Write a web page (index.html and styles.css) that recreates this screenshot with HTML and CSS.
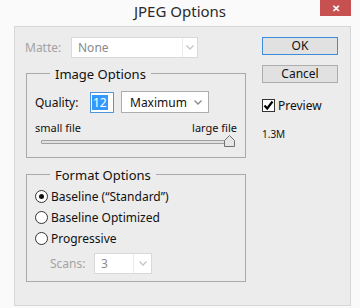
FILE: index.html
```html
<!DOCTYPE html>
<html lang="en">
<head>
    <meta charset="UTF-8">
    <meta name="viewport" content="width=device-width, initial-scale=1.0">
    <title>JPEG Options</title>
    <link rel="stylesheet" href="styles.css">
</head>
<body>
    <div class="window">
        <div class="titlebar">
            <span></span>
            <span class="title">JPEG Options</span>
            <button class="close-btn">&#x2715;</button>
        </div>

        <div class="panel">
            <div class="left">
                <div class="matte-row">
                    <span class="label disabled">Matte:</span>
                    <div class="select select-matte disabled">
                        <span class="select-text">None</span>
                        <span class="select-arrow">
                            <svg width="8" height="5" viewBox="0 0 8 5"><polyline points="0.5,0.5 4,4 7.5,0.5" fill="none" stroke="#c4c4c4" stroke-width="1.3"/></svg>
                        </span>
                    </div>
                </div>

                <div class="group image-group">
                    <div class="group-title">Image Options</div>
                    <div class="quality-row">
                        <span class="label quality-label">Quality:</span>
                        <div class="num-input"><span class="selected-text">12</span></div>
                        <div class="select select-quality">
                            <span class="select-text">Maximum</span>
                            <span class="select-arrow">
                                <svg width="8" height="5" viewBox="0 0 8 5"><polyline points="0.5,0.5 4,4 7.5,0.5" fill="none" stroke="#888" stroke-width="1.3"/></svg>
                            </span>
                        </div>
                    </div>
                    <div class="slider-labels">
                        <span>small file</span>
                        <span>large file</span>
                    </div>
                    <div class="slider">
                        <div class="track"></div>
                        <svg class="thumb" width="11" height="12" viewBox="0 0 11 12">
                            <path d="M0.5,5.5 L5.5,0.5 L10.5,5.5 L10.5,11.5 L0.5,11.5 Z" fill="#e6e6e6" stroke="#707070" stroke-width="1"/>
                        </svg>
                    </div>
                </div>

                <div class="group format-group">
                    <div class="group-title">Format Options</div>
                    <label class="radio-row">
                        <span class="radio checked"></span>
                        <span>Baseline (&ldquo;Standard&rdquo;)</span>
                    </label>
                    <label class="radio-row">
                        <span class="radio"></span>
                        <span>Baseline Optimized</span>
                    </label>
                    <label class="radio-row">
                        <span class="radio"></span>
                        <span>Progressive</span>
                    </label>
                    <div class="scans-row">
                        <span class="label disabled scans-label">Scans:</span>
                        <div class="select select-scans disabled">
                            <span class="select-text">3</span>
                            <span class="select-arrow">
                                <svg width="8" height="5" viewBox="0 0 8 5"><polyline points="0.5,0.5 4,4 7.5,0.5" fill="none" stroke="#c4c4c4" stroke-width="1.3"/></svg>
                            </span>
                        </div>
                    </div>
                </div>
            </div>

            <div class="right">
                <button class="btn btn-default">OK</button>
                <button class="btn">Cancel</button>
                <label class="check-row">
                    <span class="checkbox">
                        <svg width="11" height="11" viewBox="0 0 11 11"><path d="M1.5,5.5 L4.2,8.5 L9.5,1.5" fill="none" stroke="#000" stroke-width="2.2"/></svg>
                    </span>
                    <span>Preview</span>
                </label>
                <div class="file-size">1.3M</div>
            </div>
        </div>
    </div>
</body>
</html>
```

FILE: styles.css
```css
* {
    margin: 0;
    padding: 0;
    box-sizing: border-box;
    font-family: 'Noto Sans', 'Liberation Sans', sans-serif;
}

body {
    background-color: #fafafa;
    width: 360px;
    height: 308px;
    overflow: hidden;
}

.window {
    width: 360px;
    height: 308px;
    display: flex;
    flex-direction: column;
}

/* title bar */
.titlebar {
    height: 26px;
    display: grid;
    grid-template-columns: 1fr auto 1fr;
    align-items: start;
}

.title {
    font-size: 15px;
    line-height: 23px;
    color: #2b2b2b;
}

.close-btn {
    justify-self: end;
    margin-right: 9px;
    width: 31px;
    height: 16px;
    border: none;
    background-color: #c75050;
    color: white;
    font-size: 10px;
    font-weight: bold;
    line-height: 16px;
}

/* main panel */
.panel {
    margin-left: 14px;
    width: 337px;
    height: 280px;
    border: 1px solid #d6d6d6;
    background-color: #ececec;
    display: flex;
}

.left {
    width: 231px;
    padding-top: 10px;
    display: flex;
    flex-direction: column;
}

.label {
    font-size: 12px;
    color: #111;
}

.disabled {
    color: #a3a3a3;
}

.matte-row {
    display: flex;
    align-items: center;
    padding-left: 10px;
    height: 21px;
}

.matte-row .label {
    width: 46px;
}

/* dropdowns */
.select {
    display: flex;
    align-items: stretch;
    background-color: white;
    border: 1px solid #adadad;
    font-size: 12px;
    color: #111;
}

.select.disabled {
    border-color: #d9d9d9;
    color: #8a8a8a;
}

.select-text {
    flex: 1;
    display: flex;
    align-items: center;
    padding-left: 6px;
}

.select-arrow {
    width: 15px;
    display: flex;
    align-items: center;
    justify-content: center;
}

.select.disabled .select-arrow {
    border-left: 1px solid #ececec;
}

.select-matte {
    width: 127px;
    height: 21px;
}

.select-quality {
    width: 88px;
    height: 22px;
    margin-left: 7px;
}

.select-quality .select-text {
    padding-left: 8px;
}

.select-quality .select-arrow {
    width: 20px;
}

.select-scans {
    width: 58px;
    height: 21px;
}

.select-scans .select-arrow {
    width: 18px;
}

/* group boxes */
.group {
    margin-left: 11px;
    width: 220px;
    border: 1px solid #a9a9a9;
    display: flex;
    flex-direction: column;
}

.group-title {
    margin: -8px 0 0 15px;
    padding: 0 5px;
    width: fit-content;
    background-color: #ececec;
    font-size: 13px;
    line-height: 16px;
    color: #111;
}

.image-group {
    margin-top: 15px;
    height: 85px;
    padding: 0 8px;
}

.quality-row {
    margin-top: 9px;
    display: flex;
    align-items: center;
    height: 22px;
}

.quality-label {
    width: 55px;
}

.num-input {
    width: 24px;
    height: 21px;
    border: 1px solid #4f94dc;
    background-color: white;
    display: flex;
    align-items: center;
    padding-left: 1px;
}

.selected-text {
    background-color: #3399ff;
    color: white;
    font-size: 12px;
    line-height: 15px;
    padding: 0 1px;
}

.slider-labels {
    margin-top: 8px;
    display: flex;
    justify-content: space-between;
    font-size: 11px;
    line-height: 14px;
    color: #111;
}

.slider {
    position: relative;
    height: 12px;
    display: flex;
    align-items: center;
    padding: 0 4px 0 6px;
}

.track {
    flex: 1;
    height: 4px;
    margin-top: 1px;
    border: 1px solid #a0a0a0;
    background-color: #e0e0e0;
    border-radius: 1px;
}

.thumb {
    position: absolute;
    right: 2px;
    top: 0;
}

.format-group {
    margin-top: 16px;
    height: 108px;
    padding: 0 8px;
}

.format-group .group-title {
    margin-bottom: 3px;
}

.radio-row {
    display: flex;
    align-items: center;
    gap: 3px;
    height: 21px;
    font-size: 12px;
    color: #111;
}

.radio {
    width: 13px;
    height: 13px;
    border: 1px solid #333;
    border-radius: 50%;
    background-color: white;
    display: flex;
    align-items: center;
    justify-content: center;
}

.radio.checked::after {
    content: '';
    width: 5px;
    height: 5px;
    border-radius: 50%;
    background-color: #111;
}

.scans-row {
    margin-top: 4px;
    display: flex;
    align-items: center;
    padding-left: 15px;
}

.scans-label {
    width: 44px;
}

/* right column */
.right {
    margin-left: 16px;
    width: 76px;
    padding-top: 10px;
    display: flex;
    flex-direction: column;
}

.btn {
    height: 18px;
    background-color: #e1e1e1;
    border: 1px solid #adadad;
    font-size: 12px;
    line-height: 16px;
    color: #111;
}

.btn + .btn {
    margin-top: 10px;
}

.btn-default {
    border-color: #3c8ddb;
}

.check-row {
    margin-top: 16px;
    display: flex;
    align-items: center;
    gap: 3px;
    height: 13px;
    font-size: 12px;
    color: #111;
}

.checkbox {
    width: 13px;
    height: 13px;
    border: 1px solid #333;
    background-color: white;
    display: flex;
    align-items: center;
    justify-content: center;
}

.file-size {
    margin-top: 16px;
    font-size: 10px;
    line-height: 12px;
    color: #111;
}
```
